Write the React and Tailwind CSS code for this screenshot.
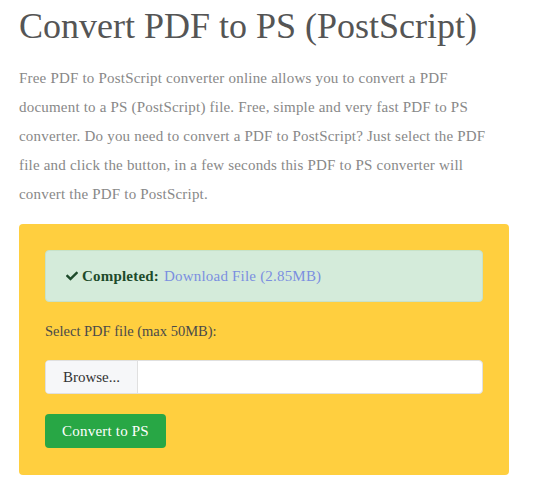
export default function App() {
  return (
    <div className="w-[550px] h-[484px] bg-white overflow-hidden" style={{ fontFamily: '"Liberation Serif", serif' }}>
      <div className="ml-[19px] w-[490px]">
        <h1 className="text-[36px] leading-[46px] text-[#555] pt-[3px] whitespace-nowrap">
          Convert PDF to PS (PostScript)
        </h1>

        <p className="mt-[15px] text-[15px] tracking-[0.2px] leading-[29px] text-[#888]">
          Free PDF to PostScript converter online allows you to convert a PDF document to a PS (PostScript) file. Free, simple and very fast PDF to PS converter. Do you need to convert a PDF to PostScript? Just select the PDF file and click the button, in a few seconds this PDF to PS converter will convert the PDF to PostScript.
        </p>

        <div className="mt-[15px] bg-[#ffcf3f] rounded-[4px] px-[26px] pt-[26px] pb-[27px]">
          <div className="h-[52px] flex items-center px-[20px] bg-[#d4ebda] border border-[#c7e2c9] rounded-[4px] text-[15px] tracking-[0.2px]">
            <span className="text-[#1d4a2a] font-bold flex items-center">
              <svg viewBox="0 0 512 512" className="w-[12px] h-[12px] mr-[4px]" fill="currentColor">
                <path d="M173.9 439.4l-166.4-166.4c-10-10-10-26.2 0-36.2l36.2-36.2c10-10 26.2-10 36.2 0L192 312.7 432.1 72.6c10-10 26.2-10 36.2 0l36.2 36.2c10 10 10 26.2 0 36.2L210.1 439.4c-10 10-26.2 10-36.2 0z" />
              </svg>
              Completed:
            </span>
            <a className="ml-[5px] text-[#7b8fe0]">Download File (2.85MB)</a>
          </div>

          <div className="mt-[19px] text-[14.5px] text-[#4a4a4a] leading-[20px]">Select PDF file (max 50MB):</div>

          <div className="mt-[19px] h-[34px] flex bg-white border border-[#e0e0e0] rounded-[4px] overflow-hidden">
            <div className="w-[92px] bg-[#f6f7f9] border-r border-[#e0e0e0] flex items-center justify-center text-[15px] text-[#333]">
              Browse...
            </div>
            <div className="flex-1" />
          </div>

          <button className="mt-[20px] h-[34px] w-[121px] bg-[#28a745] text-white text-[15px] tracking-[0.2px] rounded-[4px]">
            Convert to PS
          </button>
        </div>
      </div>
    </div>
  );
}
